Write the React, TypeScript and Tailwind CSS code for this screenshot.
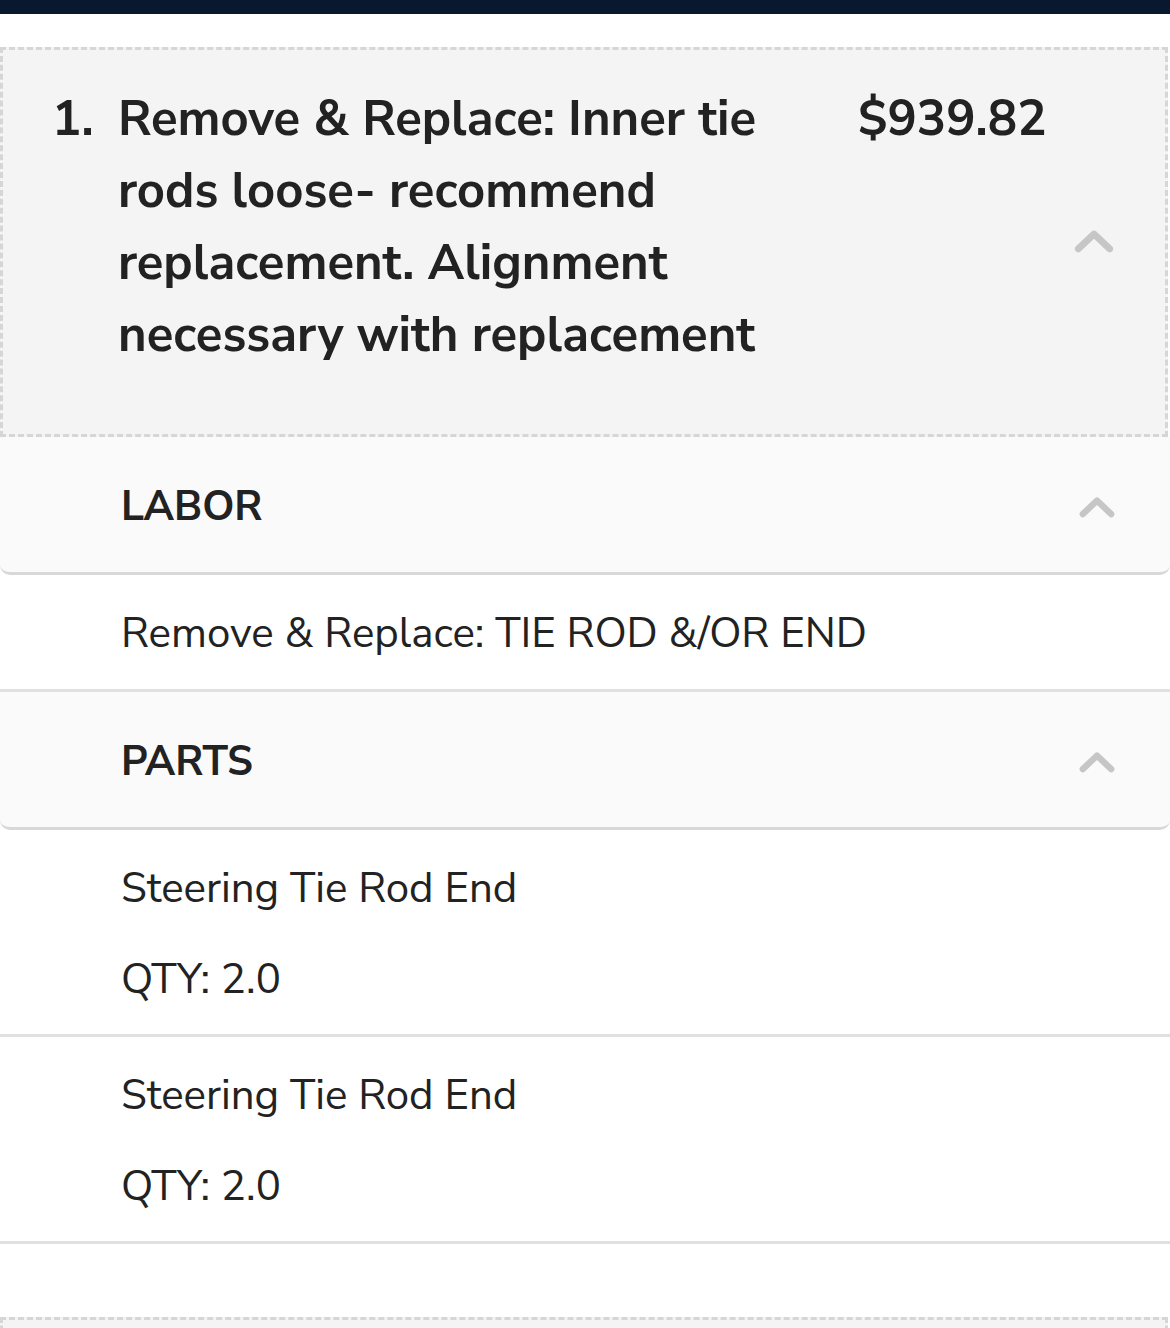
const font = { fontFamily: '"Nunito Sans", Lato, "Open Sans", sans-serif' };

function Chevron({ className = '' }: { className?: string }) {
  return (
    <svg viewBox="0 0 48 30" className={className} aria-hidden>
      <path d="M6 24 L24 7 L42 24" fill="none" stroke="#c6c6c6" strokeWidth="8" strokeLinecap="round" strokeLinejoin="round" />
    </svg>
  );
}

function SectionHeader({ title }: { title: string }) {
  return (
    <div className="flex h-[138px] items-center justify-between rounded-b-[10px] border-b-[3px] border-[#d8d8d8] bg-[#fafafa] pt-[4px] pl-[121px] pr-[54px]">
      <span className="text-[41px] font-bold text-[#222]">{title}</span>
      <Chevron className="w-[38px] h-[24px]" />
    </div>
  );
}

function Part({ name, qty }: { name: string; qty: string }) {
  return (
    <div className="flex flex-col gap-[33px] border-b-[3px] border-[#e0e0e0] pl-[121px] pt-[30px] pb-[25px] text-[42px] text-[#222]">
      <div className="leading-[58px]">{name}</div>
      <div className="leading-[58px]">{qty}</div>
    </div>
  );
}

export default function App() {
  return (
    <div className="min-h-screen w-[1170px] bg-white overflow-hidden" style={font}>
      <div className="h-[14px] bg-[#07182f]" />
      <div className="pt-[33px]">
        <div className="mr-[2px] flex items-start border-[3px] border-dashed border-[#d6d6d6] bg-[#f4f4f4] pl-[49px] pr-[50px] pt-[33px] pb-[63px]">
          <div className="w-[66px] shrink-0 text-[49px] font-bold leading-[72px] text-[#222]">1.</div>
          <div className="w-[690px] shrink-0 text-[49px] font-bold leading-[72px] text-[#222]">
            Remove &amp; Replace: Inner tie rods loose- recommend replacement. Alignment necessary with replacement
          </div>
          <div className="ml-[50px] text-[49px] font-bold leading-[72px] text-[#222]">$939.82</div>
          <div className="ml-auto self-center pt-[27px]">
            <Chevron className="w-[42px] h-[26px]" />
          </div>
        </div>

        <SectionHeader title="LABOR" />
        <div className="flex h-[117px] items-center border-b-[3px] border-[#e0e0e0] pl-[121px] pt-[2px] text-[42px] text-[#222]">
          Remove &amp; Replace: TIE ROD &amp;/OR END
        </div>

        <SectionHeader title="PARTS" />
        <Part name="Steering Tie Rod End" qty="QTY: 2.0" />
        <Part name="Steering Tie Rod End" qty="QTY: 2.0" />

        <div className="h-[73px]" />
        <div className="mr-[2px] h-[40px] border-[3px] border-dashed border-[#d6d6d6] bg-[#f4f4f4]" />
      </div>
    </div>
  );
}
